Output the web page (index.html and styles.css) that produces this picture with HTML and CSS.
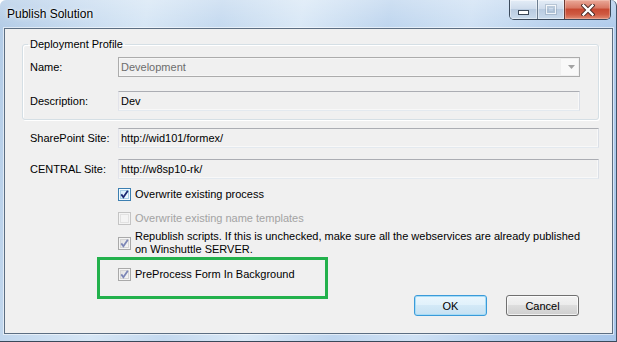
FILE: index.html
```html
<!DOCTYPE html>
<html>
<head>
<meta charset="utf-8">
<title>Publish Solution</title>
<link rel="stylesheet" href="styles.css">
</head>
<body>
<svg class="defs" width="0" height="0" aria-hidden="true">
  <defs>
    <linearGradient id="cbInnerDis" x1="0" y1="0" x2="1" y2="1">
      <stop offset="0" stop-color="#e1e1e1"/>
      <stop offset="1" stop-color="#f7f7f7"/>
    </linearGradient>
    <linearGradient id="cbInnerHot" x1="0" y1="0" x2="1" y2="1">
      <stop offset="0" stop-color="#d4ecfa"/>
      <stop offset="1" stop-color="#f4fbff"/>
    </linearGradient>
  </defs>
</svg>
<div class="window">
  <div class="titlebar">
    <span class="title">Publish Solution</span>
    <div class="caption">
      <div class="cap cap-min"><span class="min-glyph"></span></div>
      <div class="cap cap-max"><span class="max-glyph"></span></div>
      <div class="cap cap-close">
        <svg width="14" height="12" viewBox="0 0 14 12">
          <path d="M2.5 1.5 L11.5 10.5 M11.5 1.5 L2.5 10.5" stroke="#4a2a26" stroke-width="4.2" stroke-linecap="square" fill="none"/>
          <path d="M2.5 1.5 L11.5 10.5 M11.5 1.5 L2.5 10.5" stroke="#ffffff" stroke-width="2.4" stroke-linecap="square" fill="none"/>
        </svg>
      </div>
    </div>
  </div>
  <div class="client">
    <fieldset class="group">
      <legend>Deployment Profile</legend>
      <div class="form-grid">
        <span class="label">Name:</span>
        <div class="combo">
          <span class="combo-text">Development</span>
          <span class="combo-btn">
            <svg width="7" height="4" viewBox="0 0 7 4"><path d="M0 0 H7 L3.5 4 Z" fill="#a3a3a3"/></svg>
          </span>
        </div>
        <span class="label">Description:</span>
        <div class="field">Dev</div>
      </div>
    </fieldset>

    <div class="site-grid">
      <span class="label">SharePoint Site:</span>
      <div class="field">http://wid101/formex/</div>
      <span class="label">CENTRAL Site:</span>
      <div class="field">http://w8sp10-rk/</div>
    </div>

    <div class="checks">
      <div class="check-row row1">
        <svg class="cb" width="13" height="13" viewBox="0 0 13 13">
          <rect x="0.5" y="0.5" width="12" height="12" fill="#f3fafe" stroke="#3c7fb1"/>
          <rect x="2.5" y="2.5" width="8" height="8" fill="url(#cbInnerHot)" stroke="#a9cfe6"/>
          <path d="M3.3 6.4 L5.4 9.2 L9.8 2.8" stroke="#1c2a74" stroke-width="1.8" fill="none"/>
        </svg>
        <span class="check-text">Overwrite existing process</span>
      </div>
      <div class="check-row row2">
        <svg class="cb" width="13" height="13" viewBox="0 0 13 13">
          <rect x="0.5" y="0.5" width="12" height="12" fill="#f4f4f4" stroke="#c4c4c4"/>
          <rect x="2.5" y="2.5" width="8" height="8" fill="#f4f4f4" stroke="#e2e2e2"/>
        </svg>
        <span class="check-text disabled">Overwrite existing name templates</span>
      </div>
      <div class="check-row row3">
        <svg class="cb" width="13" height="13" viewBox="0 0 13 13">
          <rect x="0.5" y="0.5" width="12" height="12" fill="#f4f4f4" stroke="#a9a9a9"/>
          <rect x="2.5" y="2.5" width="8" height="8" fill="url(#cbInnerDis)" stroke="#d5d5d5"/>
          <path d="M3.3 6.4 L5.4 9.2 L9.8 2.8" stroke="#7c86b6" stroke-width="1.8" fill="none"/>
        </svg>
        <span class="check-text">Republish scripts. If this is unchecked, make sure all the webservices are already published<br>on Winshuttle SERVER.</span>
      </div>
      <div class="check-row row4">
        <svg class="cb" width="13" height="13" viewBox="0 0 13 13">
          <rect x="0.5" y="0.5" width="12" height="12" fill="#f4f4f4" stroke="#a9a9a9"/>
          <rect x="2.5" y="2.5" width="8" height="8" fill="url(#cbInnerDis)" stroke="#d5d5d5"/>
          <path d="M3.3 6.4 L5.4 9.2 L9.8 2.8" stroke="#7c86b6" stroke-width="1.8" fill="none"/>
        </svg>
        <span class="check-text">PreProcess Form In Background</span>
      </div>
    </div>

    <div class="buttons">
      <button class="btn btn-default">OK</button>
      <button class="btn">Cancel</button>
    </div>

    <div class="highlight"></div>
  </div>
</div>
</body>
</html>
```
FILE: styles.css
```css
* { box-sizing: border-box; }

html, body {
  margin: 0;
  padding: 0;
}

body {
  width: 617px;
  height: 342px;
  overflow: hidden;
  font-family: "Liberation Sans", Arial, sans-serif;
  font-size: 11px;
  color: #000;
  background: #ffffff;
}

.defs {
  position: absolute;
  width: 0;
  height: 0;
}

.window {
  width: 617px;
  height: 342px;
  display: flex;
  flex-direction: column;
  border-right: 1px solid #43546a;
  border-bottom: 1px solid #3a495a;
  border-radius: 6px 6px 0 0;
  background:
    linear-gradient(180deg, rgba(255,255,255,0.25) 0px, rgba(255,255,255,0) 28px),
    linear-gradient(100deg, #b2cbe6 0%, #c3d8ee 10%, #d6e6f5 22%, #c4d9ef 33%, #d9e8f6 45%, #bed5ee 58%, #cfe1f4 70%, #b8d1ed 82%, #a8c6ea 100%);
}

.titlebar {
  height: 28px;
  flex: none;
  display: flex;
  align-items: flex-start;
}

.title {
  padding: 7px 0 0 7px;
  font-family: "Liberation Sans", Arial, sans-serif;
  font-size: 12px;
  line-height: 15px;
  color: #000;
  text-shadow: 0 0 5px rgba(255,255,255,0.9), 0 0 2px rgba(255,255,255,0.8);
}

.caption {
  margin-left: auto;
  margin-right: 5px;
  display: flex;
  height: 20px;
  border: 1px solid #3b4a5c;
  border-top: none;
  border-radius: 0 0 5px 5px;
  overflow: hidden;
}

.cap {
  height: 19px;
  display: flex;
  align-items: center;
  justify-content: center;
}

.cap-min {
  width: 27px;
  background: linear-gradient(180deg, #e4edf7 0%, #cfdcec 45%, #b9cbe0 50%, #c9daec 100%);
  box-shadow: inset 0 0 0 1px rgba(255,255,255,0.45);
}

.cap-max {
  width: 27px;
  border-left: 1px solid #6c7d90;
  background: linear-gradient(180deg, #e4edf7 0%, #cfdcec 45%, #b9cbe0 50%, #c9daec 100%);
  box-shadow: inset 0 0 0 1px rgba(255,255,255,0.45);
}

.cap-close {
  width: 46px;
  border-left: 1px solid #6b3a33;
  background: linear-gradient(180deg, #eaa999 0%, #d97a66 40%, #c84a33 50%, #cf5a42 75%, #e08a72 100%);
  box-shadow: inset 0 0 0 1px rgba(255,220,210,0.35);
}

.min-glyph {
  display: block;
  width: 11px;
  height: 5px;
  margin-top: 6px;
  border: 1px solid #3a4757;
  background: #ffffff;
}

.max-glyph {
  display: block;
  width: 10px;
  height: 9px;
  border: 1px solid rgba(255,255,255,0.75);
  box-shadow: inset 0 0 0 2px rgba(160,180,200,0.5), 0 0 0 1px rgba(120,140,160,0.35);
}

.client {
  flex: none;
  position: relative;
  height: 306px;
  margin: 0 3px 0 4px;
  padding-top: 9px;
  background: #f0f0f0;
  border: 1px solid #5c6e82;
  box-shadow: 0 0 0 1px rgba(255,255,255,0.55);
}

.group {
  margin: 0 0 0 17px;
  width: 577px;
  min-inline-size: 0;
  padding: 6px 18px 8px 7px;
  border: 1px solid #d5dfe5;
  border-radius: 3px;
  box-shadow: inset 1px 1px 0 #ffffff, 1px 1px 0 #ffffff;
}

.group legend {
  margin-left: -2px;
  padding: 0 2px;
  line-height: 13px;
  font-size: 11px;
}

.form-grid {
  display: grid;
  grid-template-columns: 88px 462px;
  grid-auto-rows: 20px;
  row-gap: 14px;
  align-items: center;
}

.site-grid {
  display: grid;
  grid-template-columns: 88px 481px;
  grid-auto-rows: 20px;
  row-gap: 11px;
  align-items: center;
  margin: 8px 0 0 25px;
}

.label {
  line-height: 13px;
  white-space: nowrap;
}

.field {
  height: 20px;
  padding: 0 2px;
  line-height: 18px;
  white-space: nowrap;
  background: #f0f0f0;
  border: 1px solid;
  border-color: #abadb3 #dbdfe6 #e3e9ef #e2e3ea;
  box-shadow: inset -1px -1px 0 #f8f8f8;
}

.combo {
  height: 20px;
  display: flex;
  border: 1px solid #acacac;
  background: #f0f0f0;
  box-shadow: inset 0 0 0 1px #f6f6f6;
}

.combo-text {
  flex: 1;
  padding-left: 2px;
  line-height: 18px;
  color: #6d6d6d;
}

.combo-btn {
  width: 19px;
  display: flex;
  align-items: center;
  justify-content: center;
  padding-left: 3px;
  background: #f9f9f9;
  border: 1px solid #f0f0f0;
}

.checks {
  margin: 9px 0 0 113px;
}

.check-row {
  display: flex;
  align-items: flex-start;
  gap: 4px;
  line-height: 13px;
}

.cb {
  display: block;
  flex: none;
}

.row2 { margin-top: 11px; }
.row3 { margin-top: 5px; align-items: center; }
.row4 { margin-top: 12px; }

.check-text {
  white-space: nowrap;
}

.check-text.disabled {
  color: #a3a3a3;
}

.buttons {
  display: flex;
  justify-content: flex-end;
  gap: 19px;
  margin-top: 14px;
  padding-right: 33px;
}

.btn {
  width: 73px;
  height: 21px;
  padding: 0;
  font-family: "Liberation Sans", Arial, sans-serif;
  font-size: 11px;
  color: #000;
  border: 1px solid #707070;
  border-radius: 3px;
  background: linear-gradient(180deg, #f3f3f3 0%, #ebebeb 50%, #dddddd 50%, #cfcfcf 100%);
  box-shadow: inset 0 0 0 1px rgba(255,255,255,0.7);
}

.btn-default {
  border-color: #3a9ad9;
  background: linear-gradient(180deg, #eaf6fd 0%, #e0f1fb 50%, #d3e9f7 50%, #c6e1f2 100%);
  box-shadow: inset 0 0 0 1px #a6dcf6;
}

.highlight {
  position: absolute;
  left: 92px;
  top: 228px;
  width: 231px;
  height: 42px;
  border: 3px solid #22b14c;
}
```
